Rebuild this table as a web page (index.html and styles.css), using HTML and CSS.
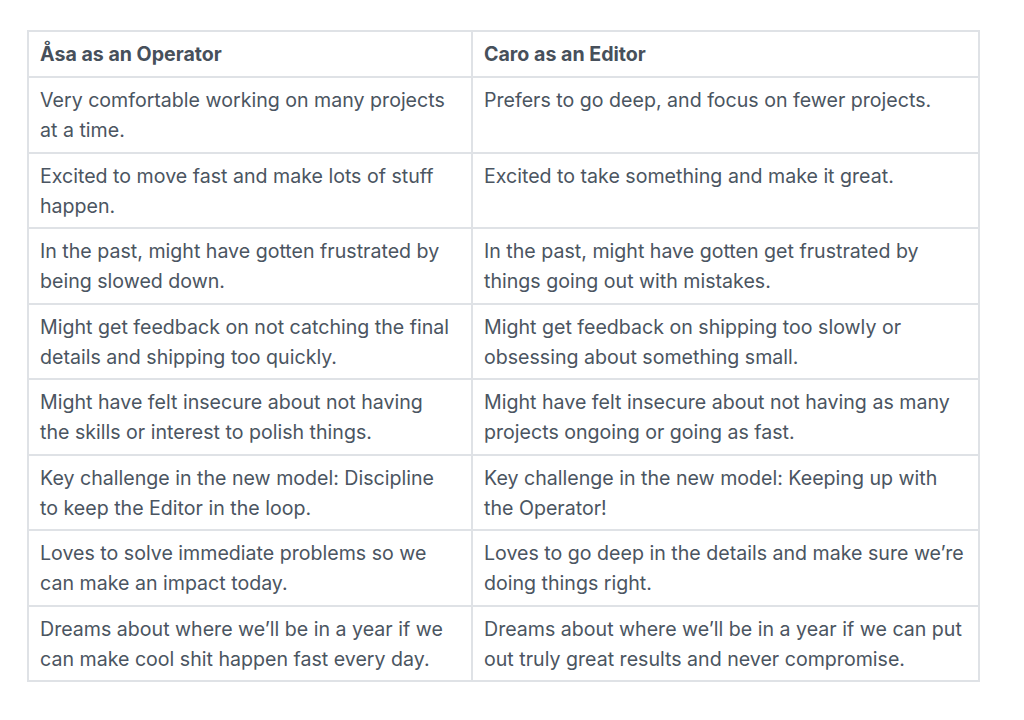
FILE: index.html
```html
<!DOCTYPE html>
<html>
<head>
<meta charset="utf-8">
<link rel="stylesheet" href="styles.css">
</head>
<body>
<table class="cmp">
  <colgroup><col class="c1"><col class="c2"></colgroup>
  <thead>
    <tr><th>Åsa as an Operator</th><th>Caro as an Editor</th></tr>
  </thead>
  <tbody>
    <tr><td>Very comfortable working on many projects at a time.</td><td>Prefers to go deep, and focus on fewer projects.</td></tr>
    <tr><td>Excited to move fast and make lots of stuff happen.</td><td>Excited to take something and make it great.</td></tr>
    <tr><td>In the past, might have gotten frustrated by being slowed down.</td><td>In the past, might have gotten get frustrated by things going out with mistakes.</td></tr>
    <tr><td>Might get feedback on not catching the final details and shipping too quickly.</td><td>Might get feedback on shipping too slowly or obsessing about something small.</td></tr>
    <tr><td>Might have felt insecure about not having the skills or interest to polish things.</td><td>Might have felt insecure about not having as many projects ongoing or going as fast.</td></tr>
    <tr><td>Key challenge in the new model: Discipline to keep the Editor in the loop.</td><td>Key challenge in the new model: Keeping up with the Operator!</td></tr>
    <tr><td>Loves to solve immediate problems so we can make an impact today.</td><td>Loves to go deep in the details and make sure we’re doing things right.</td></tr>
    <tr><td>Dreams about where we’ll be in a year if we can make cool shit happen fast every day.</td><td>Dreams about where we’ll be in a year if we can put out truly great results and never compromise.</td></tr>
  </tbody>
</table>
</body>
</html>
```

FILE: styles.css
```css
html, body {
  margin: 0;
  padding: 0;
  background: #ffffff;
}
body {
  padding: 30px 0 0 27px;
  font-family: "Inter", "Liberation Sans", sans-serif;
  color: #4b5561;
}
.cmp {
  border-collapse: collapse;
  width: 951px;
  table-layout: fixed;
  font-size: 19.6px;
  line-height: 30px;
}
.c1 { width: 444px; }
.c2 { width: 507px; }
.cmp th, .cmp td {
  border: 2px solid #dfe2e6;
  padding: 7px 6px 6.5px 11px;
  text-align: left;
  vertical-align: top;
}
.cmp th:first-child, .cmp td:first-child {
  padding-right: 16px;
}
.cmp th {
  font-weight: 700;
  color: #47505b;
  padding-bottom: 7px;
}
.cmp td {
  font-weight: 400;
  height: 60px;
}
```
